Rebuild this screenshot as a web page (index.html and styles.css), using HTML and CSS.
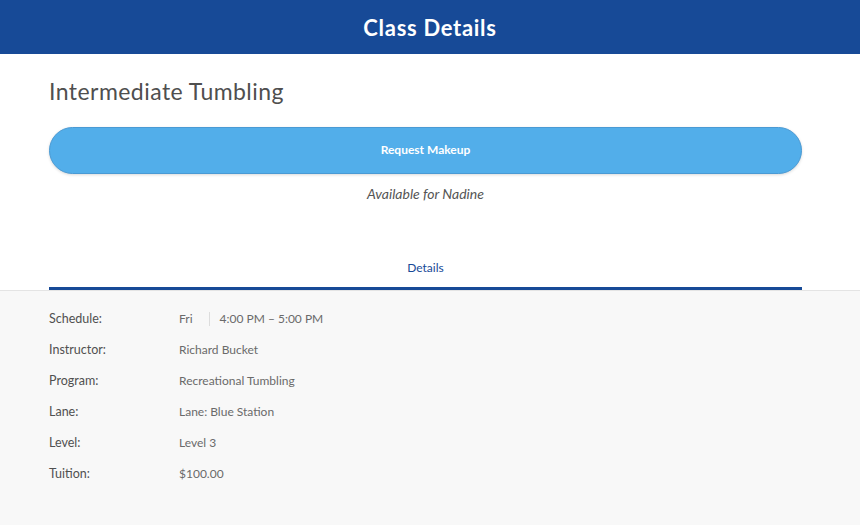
FILE: index.html
```html
<!DOCTYPE html>
<html>
<head>
<meta charset="utf-8">
<link rel="stylesheet" href="styles.css">
</head>
<body>
<header class="topbar">Class Details</header>
<section class="top">
  <h1 class="title">Intermediate Tumbling</h1>
  <button class="btn">Request Makeup</button>
  <p class="avail">Available for Nadine</p>
  <div class="tabs"><div class="tab">Details</div></div>
</section>
<section class="details">
  <div class="row"><div class="label">Schedule:</div><div class="value"><span class="day">Fri</span><span class="time">4:00 PM – 5:00 PM</span></div></div>
  <div class="row"><div class="label">Instructor:</div><div class="value">Richard Bucket</div></div>
  <div class="row"><div class="label">Program:</div><div class="value">Recreational Tumbling</div></div>
  <div class="row"><div class="label">Lane:</div><div class="value">Lane: Blue Station</div></div>
  <div class="row"><div class="label">Level:</div><div class="value">Level 3</div></div>
  <div class="row"><div class="label">Tuition:</div><div class="value">$100.00</div></div>
</section>
</body>
</html>
```
FILE: styles.css
```css
html, body { margin: 0; padding: 0; }
body {
  font-family: Lato, "Open Sans", sans-serif;
  background: #f8f8f8;
  height: 525px;
  overflow: hidden;
  color: #555;
}
.topbar {
  height: 54px;
  background: #174a97;
  color: #fff;
  font-weight: 700;
  font-size: 22px;
  letter-spacing: 0.7px;
  display: flex;
  align-items: center;
  justify-content: center;
}
.top {
  background: #fff;
  padding: 0 58px 0 49px;
}
.title {
  margin: 0;
  padding-top: 23px;
  font-size: 23px;
  font-weight: 400;
  letter-spacing: 0.45px;
  color: #4f4f4f;
  line-height: 28px;
}
.btn {
  display: block;
  width: 100%;
  height: 47px;
  margin-top: 22px;
  border: 1px solid #4a9ad4;
  border-radius: 24px;
  background: #52aeea;
  color: #fff;
  font-family: Lato, sans-serif;
  font-weight: 700;
  font-size: 12px;
  box-shadow: 0 1px 3px rgba(0,0,0,0.15);
  padding: 0 0 2px;
}
.avail {
  margin: 12px 0 0;
  text-align: center;
  font-style: italic;
  font-size: 14px;
  line-height: 16px;
  color: #555;
}
.tabs {
  margin-top: 58px;
  border-bottom: 3px solid #174a97;
}
.tab {
  text-align: center;
  font-size: 12px;
  color: #174a97;
  line-height: 16px;
  padding-bottom: 11px;
}
.details {
  border-top: 1px solid #e4e4e4;
  padding: 12px 49px 0;
}
.row {
  display: flex;
  height: 31px;
  align-items: center;
  font-size: 12.5px;
}
.label {
  width: 130px;
  color: #505050;
}
.value {
  color: #6a6a6a;
  font-weight: 400;
  font-size: 12px;
  display: flex;
  align-items: center;
}
.day {
  padding-right: 16px;
}
.time {
  border-left: 1px solid #ddd;
  padding-left: 10px;
  line-height: 14px;
}
```
